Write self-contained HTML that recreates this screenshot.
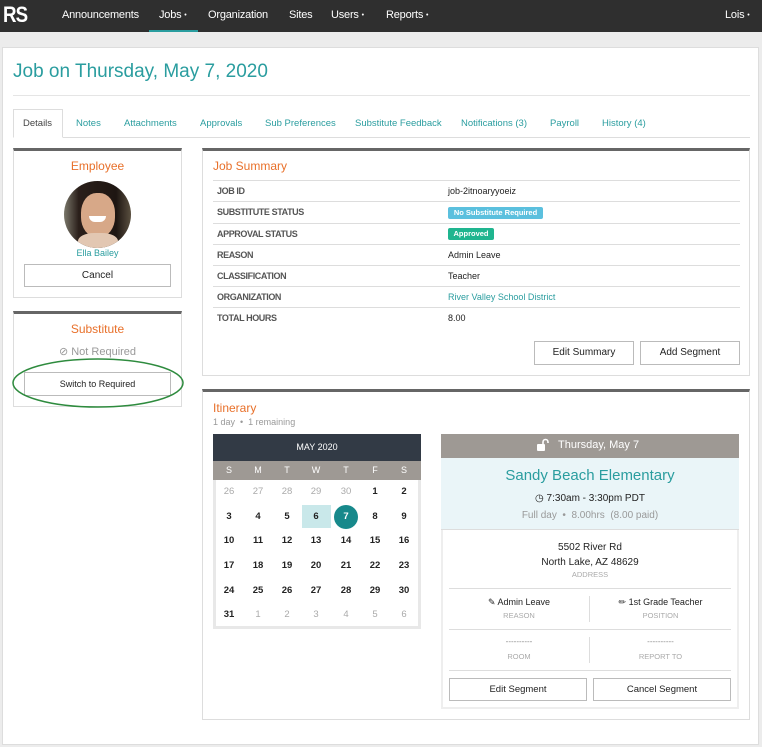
<!DOCTYPE html>
<html><head><meta charset="utf-8"><style>
*{box-sizing:border-box;margin:0;padding:0}
body{width:762px;height:747px;background:#ececec;font-family:"Liberation Sans",sans-serif;position:relative;overflow:hidden;color:#222}
.a{position:absolute}
.nav{left:0;top:0;width:762px;height:32px;background:#2f2f2f}
.nav span{position:absolute;top:9px;color:#fff;font-size:11px;letter-spacing:-0.2px}
.nav i{font-style:normal;font-size:7px;vertical-align:1px}
.card{left:2px;top:47px;width:757px;height:698px;background:#fff;border:1px solid #ddd}
.teal{color:#2a9d9f}
.or{color:#e8702a}
.panel{background:#fff;border:1px solid #ddd;border-top:3px solid #666}
.btn{position:absolute;border:1px solid #bbb;background:#fff;font-size:10px;text-align:center;color:#222}
.tab{position:absolute;top:118px;font-size:9.5px;color:#2a9d9f}
.lbl{position:absolute;left:217px;font-size:9px;font-weight:bold;color:#555;letter-spacing:-0.4px}
.val{position:absolute;left:448px;font-size:9px;color:#222}
.hl{position:absolute;left:213px;width:527px;height:1px;background:#ddd}
.cd{position:absolute;width:24px;text-align:center;font-size:9.5px;font-weight:bold;color:#222}
.cd.g{color:#aaa;font-weight:normal}
.c{text-align:center}
</style></head><body>
<div class="a nav">
<span style="left:3px;top:2px;font-size:22px;font-weight:bold;letter-spacing:-1px;transform:scaleX(.85);transform-origin:left">RS</span>
<span style="left:62px">Announcements</span>
<span style="left:159px">Jobs <i>•</i></span>
<span style="left:208px">Organization</span>
<span style="left:289px">Sites</span>
<span style="left:331px">Users <i>•</i></span>
<span style="left:386px">Reports <i>•</i></span>
<span style="left:725px">Lois <i>•</i></span>
<div class="a" style="left:149px;top:30px;width:49px;height:2px;background:#2a9d9f"></div>
</div>
<div class="a card"></div>
<div class="a teal" style="left:13px;top:61px;font-size:19px">Job on Thursday, May 7, 2020</div>
<div class="a" style="left:13px;top:95px;width:737px;height:1px;background:#e5e5e5"></div>
<div class="a" style="left:13px;top:137px;width:737px;height:1px;background:#ddd"></div>
<div class="a" style="left:13px;top:109px;width:50px;height:29px;border:1px solid #ddd;border-bottom:1px solid #fff;background:#fff"></div>
<div class="tab" style="left:23px;color:#444">Details</div>
<div class="tab" style="left:76px">Notes</div>
<div class="tab" style="left:124px">Attachments</div>
<div class="tab" style="left:200px">Approvals</div>
<div class="tab" style="left:265px">Sub Preferences</div>
<div class="tab" style="left:355px">Substitute Feedback</div>
<div class="tab" style="left:461px">Notifications (3)</div>
<div class="tab" style="left:550px">Payroll</div>
<div class="tab" style="left:602px">History (4)</div>

<div class="a panel" style="left:13px;top:148px;width:169px;height:150px"></div>
<div class="a or c" style="left:13px;top:159px;width:169px;font-size:12px">Employee</div>
<div class="a" style="left:64px;top:181px;width:67px;height:67px;border-radius:50%;overflow:hidden;background:linear-gradient(90deg,#7a776a 0,#2a1f1a 22%,#1e1612 78%,#5a5040 100%)">
<div class="a" style="left:17px;top:12px;width:34px;height:44px;background:#d7a888;border-radius:45%"></div>
<div class="a" style="left:14px;top:52px;width:40px;height:20px;background:#e2c7b2;border-radius:40%"></div>
<div class="a" style="left:25px;top:35px;width:17px;height:6px;background:#fff;border-radius:0 0 8px 8px"></div></div>
<div class="a teal c" style="left:13px;top:248px;width:169px;font-size:9px">Ella Bailey</div>
<div class="btn" style="left:24px;top:264px;width:147px;height:23px;line-height:21px">Cancel</div>

<div class="a panel" style="left:13px;top:311px;width:169px;height:96px"></div>
<div class="a or c" style="left:13px;top:322px;width:169px;font-size:12px">Substitute</div>
<div class="a c" style="left:13px;top:345px;width:169px;font-size:11px;color:#999">⊘ Not Required</div>
<div class="btn" style="left:24px;top:372px;width:147px;height:24px;line-height:22px;font-size:9px">Switch to Required</div>
<svg class="a" style="left:10px;top:355px" width="180" height="55"><ellipse cx="88" cy="28" rx="85" ry="24" fill="none" stroke="#2e8b3e" stroke-width="1.5"/></svg>

<div class="a panel" style="left:202px;top:148px;width:548px;height:228px"></div>
<div class="a or" style="left:213px;top:159px;font-size:12px">Job Summary</div>
<div class="hl" style="top:180px"></div><div class="hl" style="top:201px"></div><div class="hl" style="top:223px"></div><div class="hl" style="top:244px"></div><div class="hl" style="top:265px"></div><div class="hl" style="top:286px"></div><div class="hl" style="top:307px"></div>
<div class="lbl" style="top:186px">JOB ID</div><div class="val" style="top:186px">job-2itnoaryyoeiz</div>
<div class="lbl" style="top:207px">SUBSTITUTE STATUS</div><div class="a" style="left:448px;top:207px;width:95px;height:12px;background:#5bc0de;border-radius:2px;color:#fff;font-size:7.5px;font-weight:bold;line-height:12px;text-align:center">No Substitute Required</div>
<div class="lbl" style="top:229px">APPROVAL STATUS</div><div class="a" style="left:448px;top:228px;width:46px;height:12px;background:#1fb58f;border-radius:2px;color:#fff;font-size:7.5px;font-weight:bold;line-height:12px;text-align:center">Approved</div>
<div class="lbl" style="top:250px">REASON</div><div class="val" style="top:250px">Admin Leave</div>
<div class="lbl" style="top:271px">CLASSIFICATION</div><div class="val" style="top:271px">Teacher</div>
<div class="lbl" style="top:292px">ORGANIZATION</div><div class="val teal" style="top:292px;color:#2a9d9f">River Valley School District</div>
<div class="lbl" style="top:313px">TOTAL HOURS</div><div class="val" style="top:313px">8.00</div>
<div class="btn" style="left:534px;top:341px;width:100px;height:24px;line-height:22px">Edit Summary</div>
<div class="btn" style="left:640px;top:341px;width:100px;height:24px;line-height:22px">Add Segment</div>

<div class="a panel" style="left:202px;top:389px;width:548px;height:331px"></div>
<div class="a or" style="left:213px;top:401px;font-size:12px">Itinerary</div>
<div class="a" style="left:213px;top:417px;font-size:9px;color:#999">1 day &nbsp;•&nbsp; 1 remaining</div>

<div class="a" style="left:213px;top:434px;width:208px;height:195px;border:3px solid #e8e8e8;border-top:none;background:#fff"></div>
<div class="a c" style="left:213px;top:434px;width:208px;height:27px;background:#323a45;color:#fff;font-size:9px;line-height:27px">MAY 2020</div>
<div class="a" style="left:213px;top:461px;width:208px;height:19px;background:#9e9994"></div>
<div class="a" style="left:302px;top:505px;width:29px;height:23px;background:#c9e8ea"></div>
<div class="a" style="left:334px;top:505px;width:24px;height:24px;border-radius:50%;background:#17898b"></div>
<div id="cal"></div>

<div class="a" style="left:441px;top:434px;width:298px;height:275px;border:2px solid #eee;border-top:none;background:#fff"></div>
<div class="a" style="left:441px;top:434px;width:298px;height:24px;background:#9e9994"></div>
<svg class="a" style="left:536px;top:438px" width="14" height="14" viewBox="0 0 14 14"><path d="M7 6V4a2.5 2.5 0 0 1 5 0v1" fill="none" stroke="#fff" stroke-width="1.6"/><rect x="1" y="6" width="8" height="7" rx="1" fill="#fff"/></svg>
<div class="a" style="left:558px;top:439px;color:#fff;font-size:11px">Thursday, May 7</div>
<div class="a" style="left:441px;top:458px;width:298px;height:72px;background:#eaf5f8;border-bottom:1px solid #ddd"></div>
<div class="a teal c" style="left:441px;top:467px;width:298px;font-size:15px">Sandy Beach Elementary</div>
<div class="a c" style="left:441px;top:493px;width:298px;font-size:10px">◷ 7:30am - 3:30pm PDT</div>
<div class="a c" style="left:441px;top:510px;width:298px;font-size:10px;color:#999">Full day &nbsp;•&nbsp; 8.00hrs &nbsp;(8.00 paid)</div>
<div class="a c" style="left:441px;top:540px;width:298px;font-size:10px;line-height:15px">5502 River Rd<br>North Lake, AZ 48629</div>
<div class="a c" style="left:441px;top:570px;width:298px;font-size:7.5px;color:#aaa">ADDRESS</div>
<div class="a" style="left:449px;top:588px;width:282px;height:1px;background:#ddd"></div>
<div class="a" style="left:449px;top:629px;width:282px;height:1px;background:#ddd"></div>
<div class="a" style="left:449px;top:670px;width:282px;height:1px;background:#ddd"></div>
<div class="a" style="left:589px;top:596px;width:1px;height:26px;background:#ddd"></div>
<div class="a" style="left:589px;top:637px;width:1px;height:26px;background:#ddd"></div>
<div class="a c" style="left:449px;top:597px;width:140px;font-size:9px">✎ Admin Leave</div>
<div class="a c" style="left:449px;top:611px;width:140px;font-size:7.5px;color:#aaa">REASON</div>
<div class="a c" style="left:590px;top:597px;width:141px;font-size:9px">✏ 1st Grade Teacher</div>
<div class="a c" style="left:590px;top:611px;width:141px;font-size:7.5px;color:#aaa">POSITION</div>
<div class="a c" style="left:449px;top:637px;width:140px;font-size:8px;color:#888">----------</div>
<div class="a c" style="left:449px;top:652px;width:140px;font-size:7.5px;color:#aaa">ROOM</div>
<div class="a c" style="left:590px;top:637px;width:141px;font-size:8px;color:#888">----------</div>
<div class="a c" style="left:590px;top:652px;width:141px;font-size:7.5px;color:#aaa">REPORT TO</div>
<div class="btn" style="left:449px;top:678px;width:138px;height:23px;line-height:21px;font-size:9.5px">Edit Segment</div>
<div class="btn" style="left:593px;top:678px;width:138px;height:23px;line-height:21px;font-size:9.5px">Cancel Segment</div>
<script>
var xs=[229,258,287,316,346,375,404],ys=[492,517,541,566,591,615],h='';
'SMTWTFS'.split('').forEach(function(d,i){h+='<div class="cd" style="left:'+(xs[i]-12)+'px;top:465px;color:#fff;font-weight:normal;font-size:9px">'+d+'</div>';});
var days=[];[26,27,28,29,30].forEach(function(d){days.push([d,1])});for(var d=1;d<=31;d++)days.push([d,0]);for(d=1;d<=6;d++)days.push([d,1]);
days.forEach(function(v,i){var r=Math.floor(i/7),c=i%7;h+='<div class="cd'+(v[1]?' g':'')+'" style="left:'+(xs[c]-12)+'px;top:'+(ys[r]-6)+'px;'+(v[0]==7&&!v[1]?'color:#fff':'')+'">'+v[0]+'</div>';});
document.getElementById('cal').innerHTML=h;
</script>
</body></html>
